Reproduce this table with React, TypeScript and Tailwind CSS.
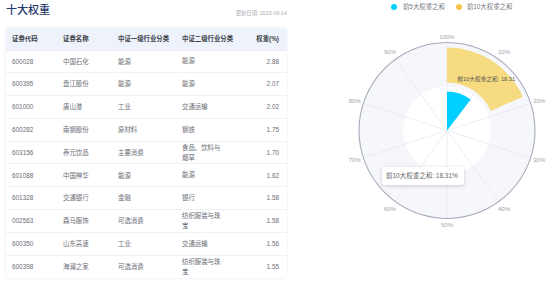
const rows = [
  ['600028', '中国石化', '能源', '能源', '2.88'],
  ['600395', '盘江股份', '能源', '能源', '2.07'],
  ['601000', '唐山港', '工业', '交通运输', '2.02'],
  ['600282', '南钢股份', '原材料', '钢铁', '1.75'],
  ['603156', '养元饮品', '主要消费', '食品、饮料与烟草', '1.70'],
  ['601088', '中国神华', '能源', '能源', '1.62'],
  ['601328', '交通银行', '金融', '银行', '1.58'],
  ['002563', '森马服饰', '可选消费', '纺织服装与珠宝', '1.58'],
  ['600350', '山东高速', '工业', '交通运输', '1.56'],
  ['600398', '海澜之家', '可选消费', '纺织服装与珠宝', '1.55'],
]

const CX = 160
const CY = 116.5
const R = 88

function pt(r: number, deg: number) {
  const a = (deg * Math.PI) / 180
  return [CX + r * Math.sin(a), CY - r * Math.cos(a)]
}

// ring sector, clockwise from 12 o'clock
function sector(r0: number, r1: number, a0: number, a1: number) {
  const [x0, y0] = pt(r1, a0)
  const [x1, y1] = pt(r1, a1)
  const large = a1 - a0 > 180 ? 1 : 0
  if (r0 <= 0) {
    return `M ${CX} ${CY} L ${x0} ${y0} A ${r1} ${r1} 0 ${large} 1 ${x1} ${y1} Z`
  }
  const [x2, y2] = pt(r0, a1)
  const [x3, y3] = pt(r0, a0)
  return `M ${x0} ${y0} A ${r1} ${r1} 0 ${large} 1 ${x1} ${y1} L ${x2} ${y2} A ${r0} ${r0} 0 ${large} 0 ${x3} ${y3} Z`
}

function PolarChart() {
  const top5 = 10.42
  const top10 = 18.31
  return (
    <svg width="267" height="270" viewBox="0 0 267 270" className="block">
      <circle cx={CX} cy={CY} r={R} fill="#f6f7fb" />
      <circle cx={CX} cy={CY} r={44} fill="#ffffff" />
      {Array.from({ length: 10 }).map((_, i) => {
        const [x, y] = pt(R, i * 36)
        return <line key={i} x1={CX} y1={CY} x2={x} y2={y} stroke="#e7e9ef" strokeWidth="0.8" />
      })}
      <path d={sector(0, 39, 0, (top5 / 100) * 360)} fill="#00cfff" />
      <path d={sector(48, 83, 0, (top10 / 100) * 360)} fill="#f6db80" />
      <circle cx={CX} cy={CY} r={R} fill="none" stroke="#a7aabb" strokeWidth="1.1" />
      {Array.from({ length: 10 }).map((_, i) => {
        const deg = i * 36
        const r = i === 0 || i === 5 ? 94 : 97
        const [x, y] = pt(r, deg)
        return (
          <text
            key={i}
            x={x}
            y={y}
            textAnchor="middle"
            dominantBaseline="central"
            fontSize="6"
            fill="#a2a4ad"
          >
            {i === 0 ? '100%' : `${i * 10}%`}
          </text>
        )
      })}
      <text x="170.3" y="65" dominantBaseline="central" fontSize="5.7" fill="#555555">
        前10大权重之和: 18.31
      </text>
    </svg>
  )
}

export default function App() {
  return (
    <div className="relative flex w-[554px] h-[284px] bg-white overflow-hidden font-['Liberation_Sans','Noto_Sans_CJK_SC',sans-serif]">
      {/* left: table */}
      <div className="flex flex-col w-[287px] pl-[6px]">
        <div className="flex h-[28px] items-start justify-between">
          <div className="pt-[2.5px] text-[11px] leading-[14px] font-medium text-[#1f3a6d]">十大权重</div>
          <div className="pt-[9.5px] text-[5.3px] leading-[6px] text-[#a9abb3]">更新日期: 2023-06-14</div>
        </div>
        <div className="rounded-[3px] bg-white shadow-[0_0_3px_rgba(30,50,90,0.1)] overflow-hidden">
          <table className="w-[281px] table-fixed border-collapse text-[6.4px]">
            <colgroup>
              <col className="w-[51px]" />
              <col className="w-[55px]" />
              <col className="w-[64px]" />
              <col className="w-[60px]" />
              <col className="w-[51px]" />
            </colgroup>
            <thead>
              <tr className="h-[22px] bg-[#eef3fb] text-[#3a3d45] font-semibold">
                <th className="pl-[6px] text-left font-semibold whitespace-nowrap">证券代码</th>
                <th className="pl-[6px] text-left font-semibold whitespace-nowrap">证券名称</th>
                <th className="pl-[6px] text-left font-semibold whitespace-nowrap">中证一级行业分类</th>
                <th className="pl-[6px] text-left font-semibold whitespace-nowrap">中证二级行业分类</th>
                <th className="pr-[8px] text-right font-semibold whitespace-nowrap">权重(%)</th>
              </tr>
            </thead>
            <tbody className="text-[#6b6e76]">
              {rows.map((r) => (
                <tr key={r[0]} className="h-[22.8px] border-t border-[#eef0f4]">
                  <td className="pl-[6px]">{r[0]}</td>
                  <td className="pl-[6px]">{r[1]}</td>
                  <td className="pl-[6px]">{r[2]}</td>
                  <td className="pl-[6px]">
                    <div className="w-[42px] leading-[10px]">{r[3]}</div>
                  </td>
                  <td className="pr-[8px] text-right">{r[4]}</td>
                </tr>
              ))}
            </tbody>
          </table>
        </div>
      </div>

      {/* right: polar chart */}
      <div className="flex flex-col flex-1">
        <div className="flex h-[14px] items-center pl-[104.3px] pt-[0px] text-[6.4px] text-[#777a82]">
          <span className="w-[6px] h-[6px] rounded-full bg-[#00cfff]" />
          <span className="ml-[5.7px]">前5大权重之和</span>
          <span className="ml-[10.7px] w-[6px] h-[6px] rounded-full bg-[#f7c648]" />
          <span className="ml-[5.3px]">前10大权重之和</span>
        </div>
        <PolarChart />
      </div>

      {/* tooltip */}
      <div className="absolute left-[381.7px] top-[167.3px] flex h-[18px] w-[82px] items-center rounded-[2px] bg-white pl-[4.3px] text-[6.5px] text-[#666] shadow-[0_1px_4px_rgba(0,0,0,0.18)] whitespace-nowrap">
        前10大权重之和: 18.31%
      </div>
    </div>
  )
}
